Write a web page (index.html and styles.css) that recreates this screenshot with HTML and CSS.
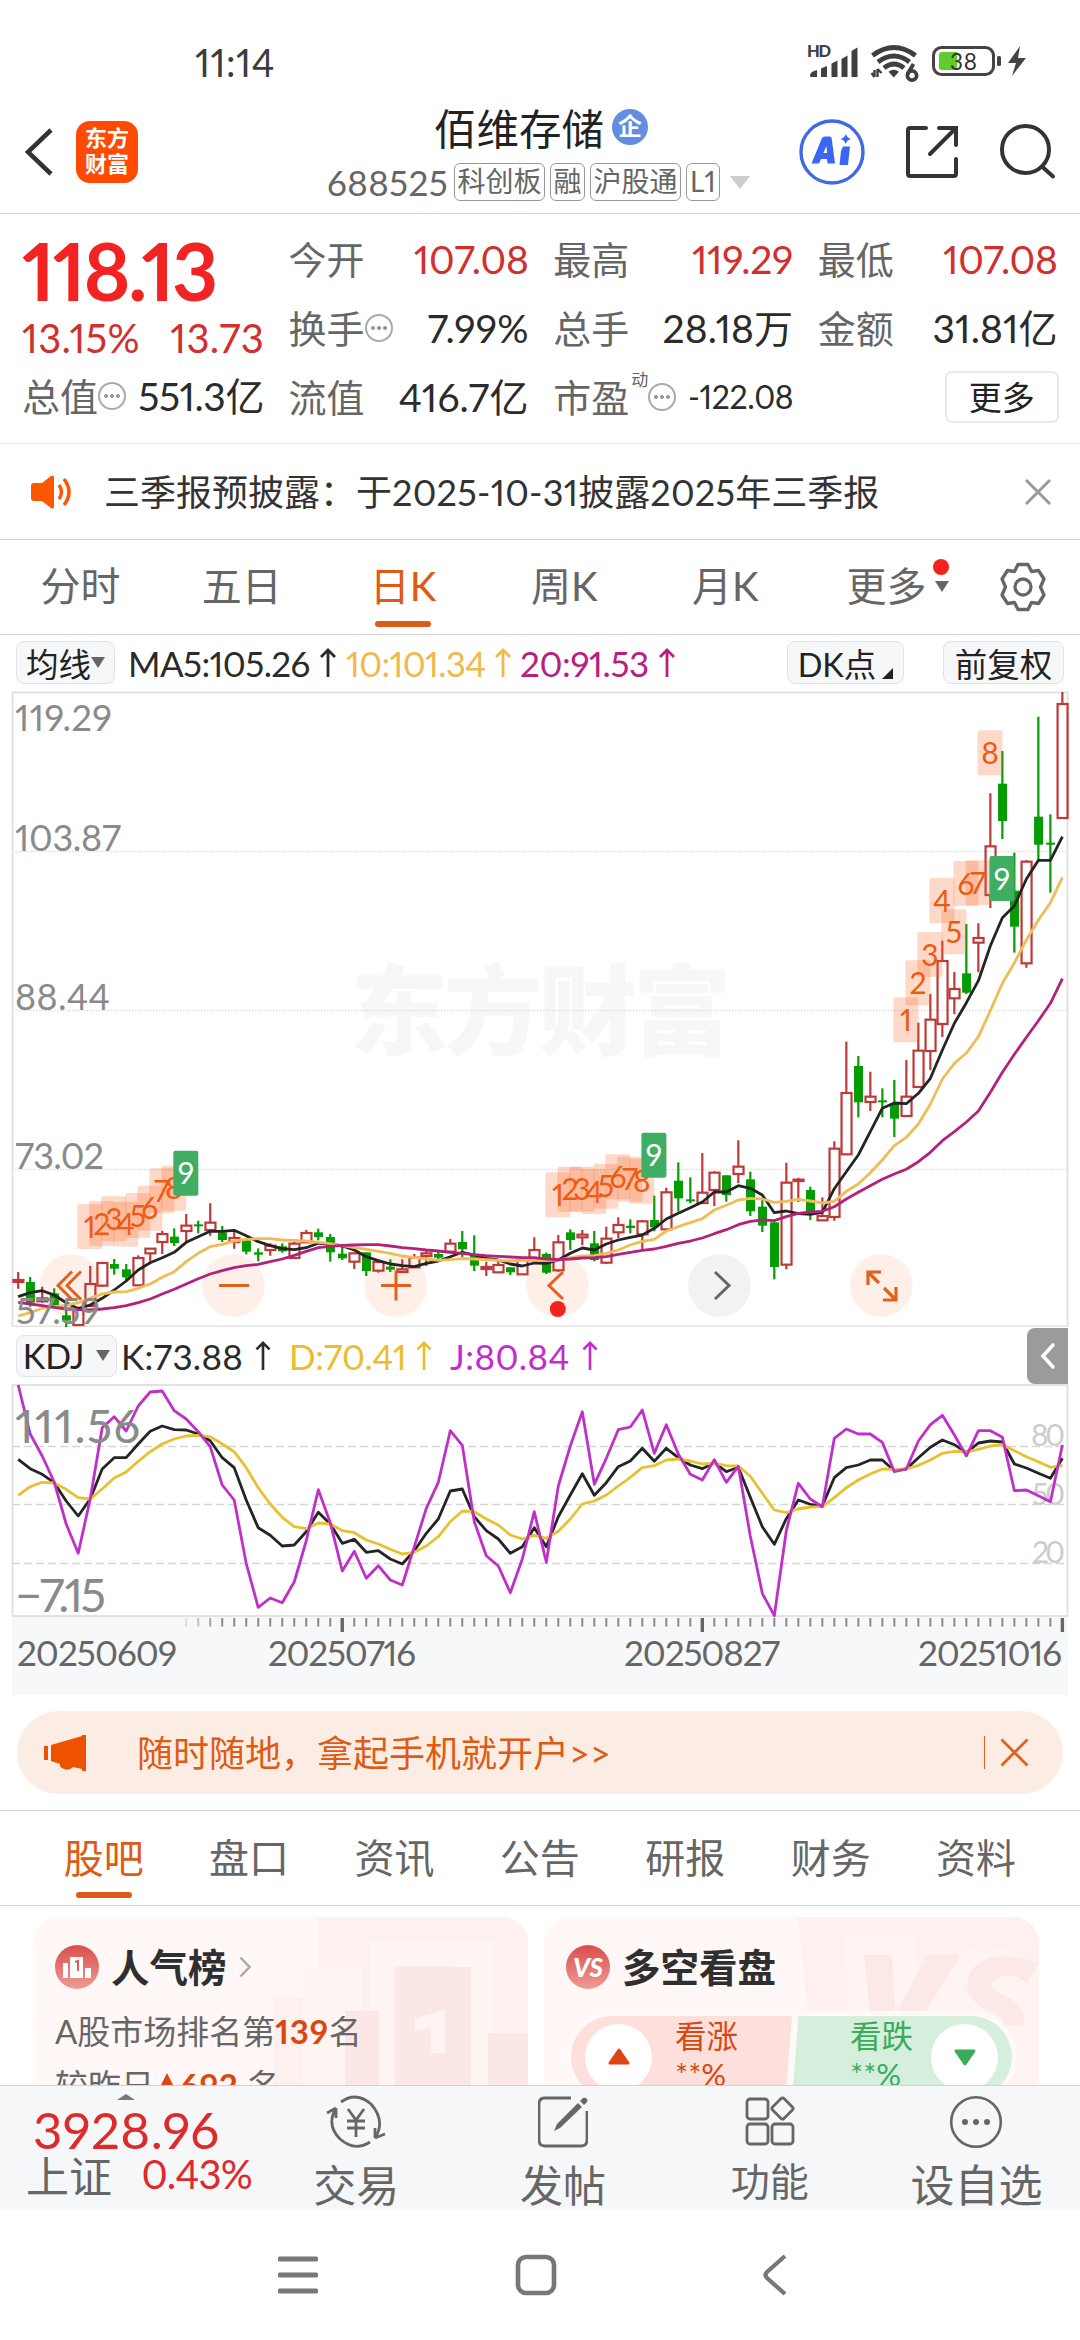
FILE: index.html
```html
<!DOCTYPE html>
<html lang="zh-CN">
<head>
<meta charset="utf-8">
<title>佰维存储 688525</title>
<link rel="stylesheet" href="styles.css">
</head>
<body>
<div class="screen">
  <div class="statusbar">
    <span class="clock">11:14</span>
    <svg class="status-icons" width="240" height="50" viewBox="0 0 240 50">
      <g fill="#3f3f3f">
        <text x="6" y="17.500" font-size="16.500" font-weight="900" textLength="24">HD</text>
        <path d="M9 36.500q0-4 7-5.500v7H10.500q-1.500 0-1.500-1.500zM20 29.500l6-2.500v11h-6zM30.500 24.500l6-3v16.500h-6zM40.500 20l6-3.500v21.500h-6zM50.500 12l6-3.500v29.500h-6z"/>
        <path d="M87.500 32.800q5-4 10.500 0l-5.200 5.600z"/>
        <path d="M73.500 31v7m0 0l-3-4m6-4v8m0-8l4 4" stroke="#3f3f3f" stroke-width="2.400" fill="none"/>
      </g>
      <g fill="none" stroke="#3f3f3f" stroke-width="4.800">
        <path d="M71.500 16.500q21.500-16 43 0"/><path d="M77 23q16-12 31.500 0"/><path d="M83 29q10-8 20 0"/>
        <circle cx="111" cy="36.500" r="4.600" stroke-width="3.800"/><path d="M106.500 35l6-10" stroke-width="3.800"/>
      </g>
      <rect x="132.500" y="8.500" width="60" height="27" rx="8" fill="none" stroke="#444" stroke-width="3"/>
      <path d="M141 13h15v18h-15q-3 0-3-3V16q0-3 3-3z" fill="#62cb2c"/>
      <text x="149" y="30.700" font-size="22.500" fill="#333" textLength="27">38</text>
      <rect x="196" y="17" width="4" height="10" rx="1.500" fill="#444"/>
      <path d="M219 7l-12 17h8l-4 13 14-18h-8l2-12z" fill="#444"/>
    </svg>
  </div>

  <header class="topbar">
    <svg class="back" width="32" height="52" viewBox="0 0 32 52"><path d="M28 4L5 26l23 22" fill="none" stroke="#333" stroke-width="4.500"/></svg>
    <div class="logo"><span>东方</span><span>财富</span></div>
    <div class="title">
      <div class="name">佰维存储<span class="badge">企</span></div>
      <div class="codes"><span class="code">688525</span><span class="tag">科创板</span><span class="tag">融</span><span class="tag">沪股通</span><span class="tag">L1</span><i class="caret"></i></div>
    </div>
    <svg class="tools" width="270" height="70" viewBox="0 0 270 70">
      <circle cx="35" cy="35" r="31" fill="none" stroke="#4169e1" stroke-width="3.400"/>
      <path d="M14.500 46.500L25 21q1-1.500 3-1.500h4.500q2 0 2.200 2L38 46.500h-7.500l-.5-4.500h-6l-2 4.500zM26.500 36h3.500l-.6-7z" fill="#3a66f5"/>
      <path d="M46 29.500h7l-2 18.500h-8.500l1.500-14zM49 17q1 4 5 5-4 1-5.500 5-1-4-5-5 4-1 5.500-5z" fill="#3a66f5"/>
      <g fill="none" stroke="#333" stroke-width="4" stroke-linecap="round">
        <path d="M129 11h-16q-2 0-2 2v44q0 2 2 2h44q2 0 2-2V42M142 11h17v17M158 12l-25 25"/>
        <circle cx="228.500" cy="32.500" r="23.500"/><path d="M245 49.500l11 10"/>
      </g>
    </svg>
  </header>

  <section class="quote">
    <div class="col first">
      <div class="price">118.13</div>
      <div class="cell change"><span>13.15%</span><span>13.73</span></div>
      <div class="cell"><label>总值<i class="info"></i></label><b>551.3亿</b></div>
    </div>
    <div class="col">
      <div class="cell"><label>今开</label><b class="up">107.08</b></div>
      <div class="cell"><label>换手<i class="info"></i></label><b>7.99%</b></div>
      <div class="cell"><label>流值</label><b>416.7亿</b></div>
    </div>
    <div class="col">
      <div class="cell"><label>最高</label><b class="up">119.29</b></div>
      <div class="cell"><label>总手</label><b>28.18万</b></div>
      <div class="cell"><label>市盈<sup>动</sup><i class="info"></i></label><b class="small">-122.08</b></div>
    </div>
    <div class="col">
      <div class="cell"><label>最低</label><b class="up">107.08</b></div>
      <div class="cell"><label>金额</label><b>31.81亿</b></div>
      <div class="cell end"><button class="more">更多</button></div>
    </div>
  </section>

  <section class="notice">
    <svg width="42" height="36" viewBox="0 0 42 36"><path d="M3 9h8L20 2q3-1.500 3 1.500v29q0 3-3 1.500L11 27H3q-3 0-3-3V12q0-3 3-3z" fill="#fd5700"/><path d="M28 11q5 7 0 14M33 5q10 13 0 26" fill="none" stroke="#fd5700" stroke-width="3.500"/></svg>
    <p>三季报预披露：于<span>2025-10-31</span>披露<span>2025</span>年三季报</p>
    <svg width="28" height="28" viewBox="0 0 28 28"><path d="M2 2l24 24M26 2L2 26" stroke="#999" stroke-width="3"/></svg>
  </section>

  <nav class="periods">
    <span>分时</span><span>五日</span><span class="on">日K</span><span>周K</span><span>月K</span>
    <span class="more-tab">更多<i class="caret"></i><i class="dot"></i></span>
    <svg width="48" height="50" viewBox="-24 -25 48 50"><path d="M-5-22.500H5L8.500-15.500 15.500-16.500 21-8 17.500 0 21 8 15.500 16.500 8.500 15.500 5 22.500H-5L-8.500 15.500-15.500 16.500-21 8-17.500 0-21-8-15.500-16.500-8.500-15.500Z" fill="none" stroke="#666" stroke-width="3.300" stroke-linejoin="round"/><circle r="8" fill="none" stroke="#666" stroke-width="3.300"/></svg>
  </nav>

  <div class="indicators">
    <span class="chip chip-ma">均线<i class="caret"></i></span>
    <span class="ma ma5">MA5:105.26<svg class="arr" viewBox="0 0 16 29"><path d="M8 29V2M1 9l7-7 7 7"/></svg></span>
    <span class="ma ma10">10:101.34<svg class="arr" viewBox="0 0 16 29"><path d="M8 29V2M1 9l7-7 7 7"/></svg></span>
    <span class="ma ma20">20:91.53<svg class="arr" viewBox="0 0 16 29"><path d="M8 29V2M1 9l7-7 7 7"/></svg></span>
    <span class="chip chip-dk">DK点<svg width="11" height="11"><path d="M11 0v11H0z" fill="#222"/></svg></span>
    <span class="chip chip-fq">前复权</span>
  </div>

  <svg class="kline" width="1080" height="636" viewBox="0 691 1080 636">
    <text class="watermark" x="350" y="1047" textLength="381">东方财富</text>
    <path d="M12 851.500H1067M12 1010.500H1067M12 1169.500H1067" stroke="#dedede" stroke-width="1.500" stroke-dasharray="1.500 1.500"/>
    <rect x="12.500" y="692.500" width="1055" height="634" fill="none" stroke="#e2e2e2" stroke-width="2"/>
    <g fill="#fef0e9"><circle cx="71" cy="1285.500" r="31.300"/><circle cx="233.500" cy="1285.500" r="31.300"/><circle cx="395.700" cy="1285.500" r="31.300"/><circle cx="557.500" cy="1285.500" r="31.300"/><circle cx="881.300" cy="1285.500" r="31.300"/></g>
    <circle cx="719.500" cy="1285.500" r="31.300" fill="#f2f2f2"/>
    <g id="candles"></g>
    <g id="averages"></g>
    <g class="axis" fill="#8a8a8a" font-size="36">
      <text x="15" y="731" textLength="97">119.29</text><text x="15" y="851" textLength="106">103.87</text>
      <text x="15" y="1010" textLength="95">88.44</text><text x="15" y="1169" textLength="89">73.02</text><text x="16" y="1324" textLength="84">57.59</text>
    </g>
    <g id="counts"></g>
    <g fill="none" stroke="#e2611c" stroke-width="3">
      <path d="M72 1271.500L58 1285.500 72 1299.500M81 1271.500L67 1285.500 81 1299.500M219 1285.500h30M381 1285.500h30M396 1270.500v30M563 1272l-14 13.500 14 13.500"/>
      <path d="M868 1285v-13h13M868 1272l11 11M883 1300h13v-13M896 1300l-12-12" stroke-width="3.200"/>
      <path d="M715 1272l14 13.500-14 13.500" stroke="#666"/>
    </g>
    <circle cx="557.800" cy="1309" r="8" fill="#f5221e"/>
  </svg>

  <div class="kdj-head">
    <span class="chip chip-kdj">KDJ<i class="caret"></i></span>
    <span class="ma k">K:73.88<svg class="arr" viewBox="0 0 16 31"><path d="M8 31V2M1 9l7-7 7 7"/></svg></span>
    <span class="ma d">D:70.41<svg class="arr" viewBox="0 0 16 31"><path d="M8 31V2M1 9l7-7 7 7"/></svg></span>
    <span class="ma j">J:80.84<svg class="arr" viewBox="0 0 16 31"><path d="M8 31V2M1 9l7-7 7 7"/></svg></span>
    <span class="collapse"><svg width="16" height="28" viewBox="0 0 16 28"><path d="M13 3L3 14l10 11" fill="none" stroke="#fff" stroke-width="3.600" stroke-linecap="round"/></svg></span>
  </div>

  <svg class="kdj" width="1080" height="311" viewBox="0 1384 1080 311">
    <rect x="12" y="1617" width="1056" height="78" fill="#f7f8fa"/>
    <rect x="12.500" y="1385" width="1055" height="231" fill="none" stroke="#e2e2e2" stroke-width="2"/>
    <path d="M12 1446.500H1067M12 1504.500H1067M12 1563.500H1067" stroke="#d6d6d6" stroke-width="1.500" stroke-dasharray="8 4"/>
    <g fill="#ccc" font-size="30"><text x="1031" y="1446" textLength="34">80</text><text x="1032" y="1505" textLength="33">50</text><text x="1032" y="1563" textLength="33">20</text></g>
    <g id="kdjlines"></g>
    <g fill="#8a8a8a" font-size="47"><text x="15" y="1443" textLength="125">111.56</text><text x="15" y="1612" textLength="91">−7.15</text></g>
    <g id="ticks"></g>
    <g fill="#666" font-size="35"><text x="17" y="1666" textLength="160">20250609</text><text x="268" y="1666" textLength="148">20250716</text><text x="624" y="1666" textLength="156">20250827</text><text x="918" y="1666" textLength="144">20251016</text></g>
  </svg>

  <div class="banner">
    <svg width="42" height="36" viewBox="0 0 42 36"><path d="M0 11h4v14H0zM7 10L38 1V0h4v36h-4v-2l-9-2q-4 4-9 2-5-2-4-5l-9-3z" fill="#ee5200"/></svg>
    <p>随时随地，拿起手机就开户&gt;&gt;</p>
    <i class="rule"></i>
    <svg width="29" height="29" viewBox="0 0 29 29"><path d="M1.500 1.500l26 26M27.500 1.500l-26 26" stroke="#e2611c" stroke-width="2.800"/></svg>
  </div>

  <nav class="sections"><span class="on">股吧</span><span>盘口</span><span>资讯</span><span>公告</span><span>研报</span><span>财务</span><span>资料</span></nav>

  <section class="cards">
    <article class="card">
      <svg class="art" width="495" height="170" viewBox="0 0 495 170"><path d="M285 0H495V170H240V80H285z" fill="#fdf1ef"/><path d="M337 24H460V170H418V48H360V170H337zM270 50h60v120h-60z" fill="#fff6f4"/><path d="M362 50h76v120h-76zM312 94h34v76h-34zM455 116h40v54h-40z" fill="#fbe8e6"/><path d="M382 102l30-10v44h-14v-26l-16 4z" fill="#fff4f2"/></svg>
      <h3><svg width="44" height="44" viewBox="0 0 44 44"><circle cx="22" cy="22" r="22" fill="url(#red)"/><path d="M8 18h5v15H8zM15 12h13v21H15zM30 23h6v10h-6z" fill="#fff"/><path d="M20 17l3-1v10" stroke="#dc5f59" stroke-width="2" fill="none"/><defs><linearGradient id="red" x2="0" y2="1"><stop stop-color="#d94f4b"/><stop offset="1" stop-color="#ee9a94"/></linearGradient></defs></svg><span>人气榜</span><svg class="chev" width="13" height="22" viewBox="0 0 13 22"><path d="M1.500 1.500l9 9.500-9 9.500" fill="none" stroke="#aaa" stroke-width="2.500"/></svg></h3>
      <p>A股市场排名第<b>139</b>名</p>
      <p class="vs-yesterday">较昨日<i class="tri"></i><b>692</b> 名</p>
    </article>
    <article class="card">
      <svg class="art" width="495" height="170" viewBox="0 0 495 170"><path d="M254 0H495V170H272z" fill="#fdf0ee"/><path d="M300 20H370l10 80 30-60Q440 15 495 50V170H310z" fill="#fff4f2"/><path d="M320 38h28l3 60 32-60h34l-42 66h-48zM495 46q-50-16-68 8-14 26 22 42 14 6 8 12h22q6-20-24-32-16-10 6-18 12 0 22 8z" fill="#fbe8e7"/></svg>
      <h3><svg width="44" height="44" viewBox="0 0 44 44"><circle cx="22" cy="22" r="22" fill="url(#red)"/><text x="7" y="32" font-size="26" font-weight="900" font-style="italic" fill="#fff" textLength="30">VS</text></svg><span>多空看盘</span></h3>
      <div class="pill">
        <div class="half rise"><i class="knob"><svg width="22" height="18" viewBox="0 0 22 18"><path d="M2 15L11 2l9 13z" fill="#e04413" stroke="#e04413" stroke-width="3" stroke-linejoin="round"/></svg></i><span>看涨<small>**%</small></span></div>
        <div class="half fall"><span>看跌<small>**%</small></span><i class="knob"><svg width="22" height="18" viewBox="0 0 22 18"><path d="M2 3h18l-9 13z" fill="#3bab5c" stroke="#3bab5c" stroke-width="3" stroke-linejoin="round"/></svg></i></div>
      </div>
    </article>
  </section>

  <footer class="dock">
    <div class="index"><i class="tri-up"></i><strong>3928.96</strong><div><span>上证</span><em>0.43%</em></div></div>
    <div class="act"><svg width="60" height="54" viewBox="0 0 60 54"><g fill="none" stroke="#666" stroke-width="2.800"><path d="M15 7Q30-4 45 9 60 26 49 43M44 47Q29 57 14 44 0 30 10 13M10 13v10M10 13L1 18M49 43l10-4M49 43V33"/><path d="M22 14l8 11 8-11M30 25v17M21 26h18M21 33h18"/></g></svg>交易</div>
    <div class="act"><svg width="50" height="54" viewBox="0 0 50 54"><path d="M33 3H7Q1 3 1 9v36q0 6 6 6h36q6 0 6-6V16" fill="none" stroke="#666" stroke-width="2.800"/><path d="M40 8l4 4L22 33l-6 3 3-7zM42 6l3-3q2-1 4 1 1 2 0 3l-3 3z" fill="#666"/></svg>发帖</div>
    <div class="act small"><svg width="50" height="54" viewBox="0 0 50 54"><g fill="none" stroke="#666" stroke-width="2.800"><rect x="2" y="4" width="21" height="20" rx="3"/><rect x="2" y="29" width="21" height="20" rx="3"/><rect x="27" y="29" width="21" height="20" rx="3"/><rect x="29.500" y="5.500" width="16" height="16" rx="2" transform="rotate(45 37.500 13.500)"/></g></svg>功能</div>
    <div class="act big"><svg width="54" height="54" viewBox="0 0 54 54"><circle cx="27" cy="27" r="24.800" fill="none" stroke="#666" stroke-width="2.600"/><g fill="#666"><circle cx="16" cy="27" r="3"/><circle cx="27" cy="27" r="3"/><circle cx="38" cy="27" r="3"/></g></svg>设自选</div>
  </footer>

  <div class="sysnav">
    <svg width="40" height="42" viewBox="0 0 40 42"><path d="M2 5h36M2 21h36M2 37h36" stroke="#777" stroke-width="5" stroke-linecap="round"/></svg>
    <svg width="42" height="42" viewBox="0 0 42 42"><rect x="3" y="3" width="36" height="36" rx="8" fill="none" stroke="#777" stroke-width="4.600"/></svg>
    <svg width="28" height="42" viewBox="0 0 28 42"><path d="M25 2L7 18q-3 3 0 6l18 16" fill="none" stroke="#777" stroke-width="4.200"/></svg>
  </div>
</div>
<script src="chart.js"></script>
</body>
</html>
```
FILE: styles.css
```css
* { box-sizing: border-box; }
body { margin: 0; background: #fff; color: #2b2b2b; font-family: Lato, "Noto Sans CJK SC", sans-serif; font-variant-numeric: proportional-nums; }
h3, p { margin: 0; font-weight: 400; }
b, em, i { font-weight: 400; font-style: normal; }
svg { display: block; flex: none; }
.screen { width: 1080px; height: 2340px; overflow: hidden; display: flex; flex-direction: column; white-space: nowrap; }
.screen > * { flex: none; }
.caret { border: 7px solid transparent; border-top: 11px solid #666; border-bottom: 0; }

.statusbar { height: 92px; padding: 35px 39px 0 195px; display: flex; justify-content: space-between; align-items: flex-start; }
.clock { font-size: 38px; line-height: 54px; letter-spacing: .5px; color: #3c3c3c; }
.status-icons { margin-top: 4px; }

.topbar { height: 122px; border-bottom: 1px solid #d2d2d2; display: flex; align-items: flex-start; padding-left: 23px; }
.back { margin-top: 34px; }
.logo { margin: 29px 0 0 21px; width: 62px; height: 62px; border-radius: 14px; background: #fe4a02; color: #fff; font-size: 22px; font-weight: 700; line-height: 26px; display: flex; flex-direction: column; align-items: center; padding-top: 4px; }
.title { margin-left: 189px; width: 423px; }
.name { display: flex; align-items: center; padding-left: 107px; padding-bottom: 2px; height: 71px; font-size: 42.500px; color: #222; }
.badge { margin-left: 8px; width: 36px; height: 36px; border-radius: 18px; background: #628de2; color: #fff; font-size: 24px; font-weight: 700; line-height: 34px; text-align: center; }
.codes { display: flex; align-items: center; height: 38px; gap: 5px; font-size: 28px; color: #666; }
.code { font-size: 35px; width: 122px; letter-spacing: .4px; }
.tag { height: 38px; line-height: 34px; border: 1.500px solid #999; border-radius: 6px; padding: 0 2.500px; }
.tag:last-of-type { padding: 0 3px; }
.codes .caret { margin-left: 5px; border-width: 13px 10px 0; border-top-color: #ccc; }
.tools { margin: 25px 0 0 47px; }

.quote { height: 230px; padding: 12px 22px 0 22px; border-bottom: 1px solid #e8e8e8; display: grid; grid-template-columns: 242px 240px 240px 240px; column-gap: 24.600px; }
.col { display: flex; flex-direction: column; }
.cell { height: 69px; display: flex; justify-content: space-between; align-items: center; font-size: 38px; line-height: 66px; padding-bottom: 3px; }
.cell label { display: flex; align-items: center; color: #666; font-size: 38px; }
.cell b { font-size: 39px; letter-spacing: .15px; }
.cell b.up { color: #d0302e; letter-spacing: -.2px; }
.cell .small { font-size: 32px; letter-spacing: -.4px; }
.cell sup { font-size: 17px; line-height: 20px; align-self: flex-start; margin-top: 6px; margin-left: 2px; }
.info { width: 28px; height: 28px; border-radius: 14px; border: 2px solid #aaa; background: radial-gradient(circle at center, #999 1.800px, transparent 2.200px) center / 6px 6px no-repeat, radial-gradient(circle, #999 1.800px, transparent 2.200px) 3px center / 6px 6px no-repeat, radial-gradient(circle, #999 1.800px, transparent 2.200px) 15px center / 6px 6px no-repeat; }
.first b { letter-spacing: -.4px; }
.price { height: 90px; line-height: 88px; font-size: 80px; font-weight: 700; color: #f12423; letter-spacing: -2.300px; }
.cell.change { height: 47px; color: #d0302e; font-size: 40px; letter-spacing: .3px; }
.end { justify-content: flex-end; }
.more { width: 114px; height: 52px; margin-right: -1px; padding: 0; border: 2px solid #e8e9ea; border-radius: 7px; background: #fff; font: 33px/44px Lato, "Noto Sans CJK SC", sans-serif; color: #222; }

.notice { height: 96px; border-bottom: 1px solid #d2d2d2; padding: 0 28px 0 31px; display: flex; align-items: center; font-size: 36px; }
.notice p { margin-left: 31px; margin-top: -3px; flex: 1; color: #333; }
.notice span { letter-spacing: .25px; }

.periods { height: 95px; border-bottom: 1px solid #d2d2d2; display: flex; align-items: center; font-size: 40px; color: #666; }
.periods > span { width: 161.200px; height: 94px; line-height: 93px; text-align: center; position: relative; }
.periods .on, .sections .on { color: #dd5b14; }
.periods .on::after, .sections .on::after { content: ""; position: absolute; left: 50%; bottom: 7px; width: 56px; height: 6px; margin-left: -28px; border-radius: 3px; background: #dd5b14; }
.periods svg { margin-left: 32px; }
.more-tab .caret { position: absolute; left: 129px; top: 41px; }
.dot { position: absolute; left: 127px; top: 19px; width: 16px; height: 16px; border-radius: 8px; background: #f5221e; }

.indicators { height: 56px; padding: 0 16px 1px; display: flex; align-items: center; }
.chip { height: 43px; border: 1.500px solid #dfe2e6; border-radius: 8px; background: #f6f7f9; color: #222; font-size: 32.500px; display: flex; align-items: center; justify-content: center; }
.chip-ma { width: 99px; }
.ma { display: flex; align-items: center; font-size: 35px; }
.arr { height: 29px; width: 16px; fill: none; stroke: currentColor; stroke-width: 2.800px; }
.ma5 { margin-left: 13px; width: 218px; letter-spacing: -.6px; }
.ma10 { width: 174px; color: #efb94e; letter-spacing: -.7px; }
.ma20 { width: 267px; color: #b8207f; letter-spacing: -.4px; }
.ma .arr { margin-left: 10px; }
.chip-dk { width: 117px; align-items: center; gap: 6px; }
.chip-dk svg { margin-top: 21px; }
.chip-fq { width: 121px; margin-left: 39px; }

.kline text, .kdj text { font-family: Lato, "Noto Sans CJK SC", sans-serif; }
.kline .watermark { font-size: 98px; font-weight: 900; fill: #f7f7f7; }

.kdj-head { height: 57px; padding: 0 12px 0 16px; display: flex; align-items: center; }
.chip-kdj { width: 101px; height: 42px; gap: 12px; font-size: 34px; }
.k { margin-left: 4px; width: 168px; letter-spacing: .3px; }
.d { width: 161px; color: #ebbd2c; letter-spacing: -.3px; }
.j { width: 170px; color: #c32bcb; letter-spacing: .5px; }
.k .arr, .j .arr { margin-left: 12px; }
.collapse { margin-left: auto; width: 41px; height: 56px; border-radius: 8px 0 0 8px; background: #9b9b9b; display: flex; align-items: center; justify-content: center; }

.banner { height: 83px; margin: 16px 17px; border-radius: 42px; background: #fcede4; display: flex; align-items: center; padding: 0 34px 0 27px; color: #dd5b14; font-size: 36px; }
.banner p { margin-left: 51px; margin-top: -3px; flex: 1; }
.rule { width: 1.500px; height: 33px; background: #e2611c; margin-right: 15px; }

.sections { height: 96px; border-top: 1px solid #d2d2d2; border-bottom: 1px solid #d2d2d2; padding-left: 31px; display: flex; font-size: 40px; color: #666; }
.sections span { width: 145.400px; line-height: 94px; text-align: center; position: relative; }

.cards { height: 179px; overflow: hidden; padding: 11px 41px 0 33px; display: grid; grid-template-columns: 1fr 1fr; gap: 16px; }
.card { height: 240px; border-radius: 26px; background: #fff8f6; overflow: hidden; position: relative; padding: 28px 22px; }
.art { position: absolute; left: 0; top: 0; }
.card h3 { height: 44px; display: flex; align-items: center; font-size: 38.500px; font-weight: 700; gap: 12px; position: relative; color: #2f2f2f; }
.card h3 span { margin-top: -5px; }
.card p { position: relative; font-size: 33px; color: #666; line-height: 40px; margin-top: 22px; }
.card p b { color: #d9480f; font-weight: 700; letter-spacing: .8px; }
.card .vs-yesterday { margin-top: 14px; }
.tri { display: inline-block; border: 11px solid transparent; border-bottom: 22px solid #e04413; border-top: 0; margin: 0 2px; vertical-align: 3px; }
.pill { position: relative; margin: 22px -1px 0 0; height: 92px; width: 451px; border: 5px solid #fffaf8; border-radius: 46px; display: flex; overflow: hidden; background: #fffaf8; }
.half { display: flex; align-items: center; font-size: 31.500px; line-height: 36px; gap: 23px; }
.half span { height: 78px; }
.half small { display: block; font-size: 31px; line-height: 40px; }
.rise { width: 221px; padding-left: 14px; background: #fddfdb; color: #d9480f; clip-path: polygon(0 0, 100% 0, 97% 100%, 0 100%); }
.fall { width: 220px; padding-right: 14px; background: #d6efdc; color: #3bab5c; justify-content: flex-end; clip-path: polygon(3% 0, 100% 0, 100% 100%, 0 100%); gap: 18px; }
.knob { width: 67px; height: 67px; border-radius: 34px; background: #fff; display: flex; align-items: center; justify-content: center; }

.dock { height: 125px; border-top: 1px solid #d2d2d2; background: #f6f7f9; display: flex; color: #666; }
.index { width: 253px; padding: 8px 0 0 26px; display: flex; flex-direction: column; }
.tri-up { width: 0; margin-left: 91px; border: 9px solid transparent; border-bottom: 6px solid #777; border-top: 0; }
.index strong { font-weight: 400; font-size: 51px; line-height: 60px; color: #dd2a2b; margin-left: 7px; letter-spacing: .4px; }
.index div { display: flex; justify-content: space-between; align-items: center; height: 28px; font-size: 43px; padding-right: 1px; }
.index em { font-size: 40px; color: #dd2a2b; letter-spacing: -.8px; }
.act { width: 206.700px; display: flex; flex-direction: column; align-items: center; padding-top: 9px; font-size: 43px; line-height: 73px; }
.act.small { font-size: 39px; line-height: 65px; }
.act.big { font-size: 44px; }

.sysnav { height: 130px; display: flex; padding: 44px 0 0 278px; }
.sysnav svg:nth-child(2) { margin-left: 197px; }
.sysnav svg:nth-child(3) { margin-left: 203px; }
```
FILE: chart.js
```js
const SVG = "http://www.w3.org/2000/svg";
const X0 = 18.2, STEP = 12.002;
const x = i => X0 + STEP * i;

function add(parent, tag, attrs, text) {
  const el = document.createElementNS(SVG, tag);
  for (const k in attrs) el.setAttribute(k, attrs[k]);
  if (text !== undefined) el.textContent = text;
  document.getElementById(parent).appendChild(el);
}

// Each run: [vertical origin, rows in thirds of a pixel]
// Candle row: direction, body top, body bottom, high, low
const candleRuns = [
  [1080, "r600,606,576,626 g606,668,591,680 r655,664,620,668 g640,678,625,678 g706,722,690,745 r688,735,680,738 r612,678,558,678 r549,617,549,620 g552,566,537,584 g568,592,552,602 r534,616,526,616 r506,520,506,545 r462,486,452,522 g470,489,445,498 r437,453,402,485 g433,438,422,460 r428,450,370,467 g457,480,438,486 r474,486,450,506 g481,515,481,523 g517,524,505,544 r497,510,490,527 g499,514,490,518 r491,534,486,534 r459,487,450,487 g457,471,446,481 g471,517,462,545 g521,535,500,540 r520,545,520,567 g517,573,517,588 r546,572,546,578 g560,569,538,576 r568,576,538,576 r533,562,522,562 r520,528,510,558 g522,533,515,545 r491,515,477,515 g486,508,453,532 g525,557,466,573 r561,567,545,588 r555,577,545,577 g562,577,562,585 r540,583,540,583"],
  [1000, "r750,780,712,785 g762,818,758,822 r727,811,705,815 g697,720,688,750 r704,712,690,736 g730,780,693,784 r716,788,680,792 r675,697,652,715 g677,684,658,700 r664,703,660,748 g660,682,587,694 r577,688,563,696 g542,595,487,635 g598,602,532,610 r578,609,459,609 r518,570,514,618 g526,585,526,605 r500,522,421,550 g538,634,515,648 g620,677,600,696 g667,801,667,838 r548,794,488,808 r539,543,533,606 g570,645,560,660 r648,661,592,661 r446,651,424,662 r279,463,125,463 g198,307,168,352 r290,306,215,333 g301,304,265,352 g310,356,240,411 r290,348,180,348"],
  [680, "r1112,1221,1028,1221 r1019,1113,942,1170 r843,1032,782,1071 r927,955,876,1003 g880,938,732,942 r774,788,730,877 r499,645,340,684 g311,423,213,477 g632,740,518,818 r545,850,541,863 g410,494,110,545 g488,493,403,638 r72,414,36,414"]
];

let n = 0;
for (const [base, rows] of candleRuns) {
  for (const row of rows.split(" ")) {
    const [t, b, h, l] = row.slice(1).split(",").map(v => base + v / 3);
    const cx = x(n++);
    if (row[0] === "g") {
      add("candles", "path", { d: `M${cx} ${h}V${l}`, stroke: "#049c05", "stroke-width": 2.2 });
      add("candles", "rect", { x: cx - 4.3, y: t, width: 9, height: Math.max(2, b - t), fill: "#049c05" });
    } else {
      add("candles", "path", { d: `M${cx} ${h}V${t}M${cx} ${b}V${l}`, stroke: "#bd3a38", "stroke-width": 2.2 });
      add("candles", "rect", { x: cx - 4.8, y: t, width: 10, height: Math.max(1, b - t), fill: "none", stroke: "#bd3a38", "stroke-width": 2.2 });
    }
  }
}

function line(parent, color, runs) {
  const pts = [];
  for (const [base, list] of runs) for (const v of list.split(" ")) pts.push(`${x(pts.length).toFixed(1)},${(base + v / 3).toFixed(1)}`);
  add(parent, "polyline", { points: pts.join(" "), fill: "none", stroke: color, "stroke-width": 2.8, "stroke-linejoin": "round" });
}

line("averages", "#242424", [
  [1080, "650 638 632 645 668 686 675 655 630 603 570 548 533 517 487 470 454 454 451 467 485 497 506 509 503 490 492 498 510 530 542 552 557 560 550 543 530 517 525 535 540 552 558 549"],
  [1000, "790 780 760 744 750 732 720 712 705 685 657 640 623 606 576 576 557 565 585 638 633 641 643 637 566"],
  [680, "1475 1425 1355 1285 1269 1271 1240 1195 1110 1030 968 902 797 713 677 597 541 541 470"]]);
line("averages", "#efbc56", [
  [1080, "708 698 685 680 676 668 655 642 636 635 625 612 592 575 545 520 500 493 483 478 476 476 480 481 483 487 491 497 503 508 514 520 528 533 537 541 539 536 537 539 541 543 541 541"],
  [1000, "782 780 773 768 767 760 750 735 724 718 693 680 668 656 630 616 600 595 597 607 604 598 603 609 604 574 552 518 480"],
  [680, "1397 1372 1332 1272 1197 1150 1119 1070 992 910 848 780 720 668 592"]]);
line("averages", "#b3217b", [
  [1080, "667 672 677 682 687 689 690 687 683 677 668 657 642 628 612 596 582 572 563 557 553 545 537 526 514 503 499 496 495 494 494 498 503 506 510 513 517 520 524 527 529 531 533 533"],
  [1000, "777 779 777 774 773 770 763 757 751 747 739 730 723 714 701 689 674 664 660 662 650 640 636 634 620 597 577 557 538 522"],
  [680, "1468 1445 1417 1382 1355 1326 1293 1237 1177 1123 1072 1022 970 896"]]);

// Sequential count badges: first candle, origin, tops of badges 1 to 9
for (const [first, base, tops] of [
  [6, 1080, [372, 363, 349, 365, 339, 317, 265, 257, 212]],
  [45, 1000, [517, 500, 500, 507, 491, 463, 470, 476, 398]],
  [74, 680, [952, 841, 756, 594, 688, 543, 541, 151, 528]]
]) {
  tops.forEach((top, k) => {
    const y = base + top / 3, cx = x(first + k) - .4, last = k === 8;
    add("counts", "rect", { x: cx - 12.5, y, width: 25, height: 45, rx: 2, fill: last ? "#3fae62" : "#fd6a2c", "fill-opacity": last ? 1 : .26 });
    add("counts", "text", { x: cx, y: y + 33.5, "text-anchor": "middle", "font-size": 30, fill: last ? "#fff" : "#ea5b10" }, k + 1);
  });
}

line("kdjlines", "#242424", [[1320, "418 446 463 488 543 588 537 447 413 413 372 334 318 329 330 342 362 413 443 540 623 646 678 675 635 577 612 670 658 697 692 717 732 692 640 597 513 507 590 632 657 700 680 623 680 590 525 461 526 488 440 423 385 424 385 413 435 446 428 455 442 532 620 673 596 540 553 558 473 443 435 420 420 452 447 413 382 360 374 398 369 363 366 432 444 460 475 415"]]);
line("kdjlines", "#e9c02f", [[1320, "526 500 487 489 508 533 537 507 474 456 424 395 372 357 348 346 350 372 395 443 503 552 592 620 626 609 612 632 638 660 672 688 702 697 678 650 605 573 575 597 615 645 657 646 655 634 597 552 543 525 498 472 443 437 420 417 423 432 430 437 438 469 520 570 578 567 561 560 533 503 480 462 447 448 447 436 420 400 394 396 388 378 374 392 410 425 442 436"]]);
line("kdjlines", "#c12fc9", [[1320, "195 342 408 486 612 700 537 323 290 333 258 216 213 272 297 335 380 495 540 730 862 834 848 786 663 509 608 753 694 775 737 780 795 680 565 487 332 376 605 707 738 818 717 575 727 498 378 275 493 415 329 321 270 400 314 402 463 480 419 487 439 648 820 887 632 490 537 560 355 327 342 342 367 455 447 363 314 286 345 408 332 332 352 512 510 527 545 375"]]);

for (let i = 14; i < 88; i++) {
  const major = i === 27 || i === 57 || i === 87;
  add("ticks", "path", { d: `M${x(i)} 1618V${major ? 1632 : 1626.5}`, stroke: major ? "#666" : "#8a8a8a", "stroke-width": major ? 3.4 : 2, opacity: Math.min(1, (i - 13) / 4) });
}
```
